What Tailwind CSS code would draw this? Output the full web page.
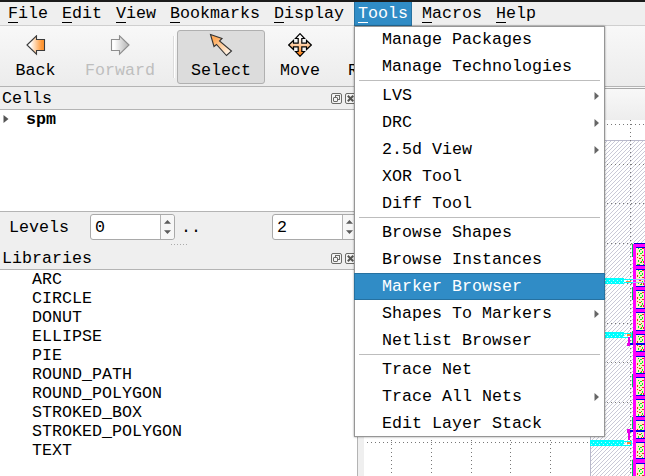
<!DOCTYPE html>
<html lang="en"><head><meta charset="utf-8"><title>Layout viewer</title>
<script src="https://cdn.jsdelivr.net/npm/@tailwindcss/browser@4"></script></head>
<body class="w-[645px] h-[476px] overflow-hidden bg-[#efefef] text-black text-[16.667px] leading-[19px] font-['Liberation_Mono',monospace] whitespace-nowrap">
<svg class="hidden">
 <symbol id="float" viewBox="0 0 11 11"><rect x=".5" y=".5" width="10" height="10" rx="1.5" fill="#f4f4f4" stroke="#6b6b68"/><rect x="4.5" y="2.5" width="4" height="4" fill="none" stroke="#6b6b68"/><rect x="2.5" y="4.5" width="4" height="4" rx=".5" fill="#f4f4f4" stroke="#6b6b68"/></symbol>
 <symbol id="close" viewBox="0 0 11 11"><rect x=".5" y=".5" width="10" height="10" rx="1.5" fill="#f4f4f4" stroke="#6b6b68"/><path d="M2.8 2.8l5.4 5.4M8.2 2.8L2.8 8.2" stroke="#555552" stroke-width="2"/></symbol>
 <symbol id="spin" viewBox="0 0 14 25"><path d="M3.2 9.5L7 5.5l3.8 4zM3.2 16.5L7 20.5l3.8-4z" fill="#5c5c5c"/></symbol>
 <symbol id="sub" viewBox="0 0 5 8"><path d="M.5 0L5 4L.5 8z" fill="#666"/></symbol>
</svg>
<div class="relative flex flex-col w-[645px] h-[476px]">
 <nav class="h-[26px] shrink-0 border-t-2 border-t-[#1b1b1b] border-b border-b-[#cfcfcf] flex text-[16.667px] leading-[24px]">
  <div class="pl-2 w-[62px]"><span class="inline-block h-[21px] border-b border-black">F</span>ile</div>
  <div class="w-[54px]"><span class="inline-block h-[21px] border-b border-black">E</span>dit</div>
  <div class="w-[54px]"><span class="inline-block h-[21px] border-b border-black">V</span>iew</div>
  <div class="w-[104px]"><span class="inline-block h-[21px] border-b border-black">B</span>ookmarks</div>
  <div class="w-[80px]"><span class="inline-block h-[21px] border-b border-black">D</span>isplay</div>
  <div class="w-[58px] h-6 bg-[#308cc6] border border-[#2671a0] border-t-0 text-white pl-[3px]"><span class="inline-block h-[21px] border-b border-white">T</span>ools</div>
  <div class="pl-[10px] w-[84px]"><span class="inline-block h-[21px] border-b border-black">M</span>acros</div>
  <div><span class="inline-block h-[21px] border-b border-black">H</span>elp</div>
 </nav>
 <div class="h-[61px] shrink-0 bg-linear-to-b from-[#f8f8f8] to-[#ececec] border-b border-[#b4b4b4] flex">
  <div class="w-[71px] pt-[9px] flex flex-col items-center">
   <svg class="w-5 h-[21px]" viewBox="0 0 20 21"><defs><linearGradient id="bk"><stop offset=".2" stop-color="#fff"/><stop offset=".85" stop-color="#ff9633"/></linearGradient></defs><path d="M1 10L10.500 .8V4.500H18.500V15.500H10.500V19.200Z" fill="url(#bk)" stroke="#3b3b3b" stroke-width="1.100"/></svg>
   <span class="mt-[5px]">Back</span></div>
  <div class="w-[98px] pt-[9px] flex flex-col items-center text-[#bebebe]">
   <svg class="w-5 h-[21px]" viewBox="0 0 20 21"><defs><linearGradient id="fw"><stop offset=".15" stop-color="#fff"/><stop offset=".9" stop-color="#bbb"/></linearGradient></defs><path d="M19 10L9.500 .8V4.500H1.500V15.500H9.500V19.200Z" fill="url(#fw)" stroke="#8e8e8e" stroke-width="1.100"/></svg>
   <span class="mt-[5px]">Forward</span></div>
  <div class="w-[2px] h-[42px] mt-[10px] ml-1 bg-[#dcdcdc] border-r border-white"></div>
  <div class="ml-[2px] mt-1 w-[88px] h-[54px] rounded-[3px] border border-[#b0b0b0] bg-[#dcdcdc] flex flex-col items-center">
   <svg class="w-6 h-6 mt-[2px]" viewBox="0 0 24 24"><defs><linearGradient id="sl" x2="1" y2="1"><stop offset=".2" stop-color="#ffa957"/><stop offset=".85" stop-color="#fff1e2"/></linearGradient></defs><path d="M1.500 1.500L13 5.500L10.500 8L22.500 18L17.500 22.500L7.500 11.500L5 13.500Z" fill="url(#sl)" stroke="#333" stroke-width="1.100"/></svg>
   <span class="mt-1">Select</span></div>
  <div class="w-[70px] pt-[7px] flex flex-col items-center">
   <svg class="w-6 h-6" viewBox="0 0 24 24"><defs><linearGradient id="mv" x2="0" y2="1"><stop offset=".2" stop-color="#fff"/><stop offset=".9" stop-color="#ff861c"/></linearGradient></defs><path d="M12 .7L16.500 5.500H13.800V10.200H18.500V7.500L23.300 12L18.500 16.500V13.800H13.800V18.500H16.500L12 23.300L7.500 18.500H10.200V13.800H5.500V16.500L.7 12L5.500 7.500V10.200H10.200V5.500H7.500Z" fill="url(#mv)" stroke="#000" stroke-width="1.200"/></svg>
   <span class="mt-1">Move</span></div>
  <div class="pt-[35px] pl-[13px]">R</div>
 </div>
 <main class="flex flex-1 min-h-0">
  <aside class="w-[358px] shrink-0 flex flex-col">
   <div class="h-[23px] shrink-0 flex items-center border-b border-[#b4b4b4] pl-[2px]"><span class="w-[329px]">Cells</span><svg class="w-[11px] h-[11px]"><use href="#float"/></svg><svg class="w-[11px] h-[11px] ml-[3px]"><use href="#close"/></svg></div>
   <div class="h-[102px] shrink-0 bg-white border-b border-[#b4b4b4] flex items-start pl-[3px]"><svg class="w-[6px] h-2 mt-[5px]" viewBox="0 0 5 8"><path d="M0 0L5 4L0 8z" fill="#555"/></svg><b class="ml-[17px]">spm</b></div>
   <div class="h-[34px] shrink-0 flex pl-[9px] relative">
    <span class="w-[81px] pt-[6px]">Levels</span>
    <div class="w-[85px] h-[26px] mt-[2px] bg-white border border-[#a9a9a9] rounded-[3px] flex"><span class="w-[69px] pl-1 pt-[3px]">0</span><div class="flex-1 border-l border-[#b4b4b4] bg-[#f7f7f7] rounded-r-[3px]"><svg class="w-[13px] h-6" viewBox="0 0 14 26"><use href="#spin" width="14" height="25"/></svg></div></div>
    <span class="ml-[6px] w-[91px] pt-[6px]">..</span>
    <div class="w-[85px] h-[26px] mt-[2px] bg-white border border-[#a9a9a9] rounded-[3px] flex"><span class="w-[69px] pl-1 pt-[3px]">2</span><div class="flex-1 border-l border-[#b4b4b4] bg-[#f7f7f7]"><svg class="w-[13px] h-6" viewBox="0 0 14 26"><use href="#spin" width="14" height="25"/></svg></div></div>
    <svg class="absolute left-[171px] top-[32px] w-[17px] h-[1px]"><path d="M0 .5H17" stroke="#aaa" stroke-dasharray="1 2"/></svg>
   </div>
   <div class="h-6 shrink-0 flex items-center border-b border-[#b4b4b4] pl-[2px] pt-px"><span class="w-[329px]">Libraries</span><svg class="w-[11px] h-[11px]"><use href="#float"/></svg><svg class="w-[11px] h-[11px] ml-[3px]"><use href="#close"/></svg></div>
   <div class="flex-1 bg-white border-r border-[#b4b4b4] pl-8 flex flex-col"><span>ARC</span><span>CIRCLE</span><span>DONUT</span><span>ELLIPSE</span><span>PIE</span><span>ROUND_PATH</span><span>ROUND_POLYGON</span><span>STROKED_BOX</span><span>STROKED_POLYGON</span><span>TEXT</span></div>
  </aside>
  <section class="ml-[6px] flex-1 flex flex-col">
   <div class="h-[33px] mt-0 shrink-0 border-t border-[#f8f8f8]"><div class="h-8 border-t border-[#a8a8a8] bg-linear-to-b from-[#f8f8f8] to-[#ededed]"></div></div>
   <svg class="flex-1 bg-white w-[281px]" viewBox="364 120 281 356" shape-rendering="crispEdges">
    <defs>
     <pattern id="hatch" width="4" height="4" patternUnits="userSpaceOnUse"><path d="M3 0h1v1h-1zM2 1h1v1h-1zM1 2h1v1h-1zM0 3h1v1h-1z" fill="#c9c9d7"/></pattern>
     <pattern id="cy" width="4" height="6" y="2" patternUnits="userSpaceOnUse"><path d="M0 0h4v6h-4z" fill="#0ff"/><path d="M1 2h1v1h-1zM3 4h1v1h-1z" fill="#b8ffff"/></pattern>
     <pattern id="cell" width="8" height="22" x="637" y="247" patternUnits="userSpaceOnUse"><path d="M0 0h8v22h-8z" fill="#ffebc8"/><path d="M1 1h1v1h-1zM3 2h2v1h-2zM2 3h1v2h-1zM5 4h1v2h-1zM3 6h2v1h-2zM2 8h1v1h-1zM4 10h1v1h-1zM1 13h1v2h-1zM5 12h1v2h-1zM3 15h2v1h-2zM6 17h1v1h-1zM0 17h2v1h-2z" fill="#00ee20"/><path d="M5 1h2v1h-2zM0 6h1v2h-1zM5 8h2v1h-2zM2 11h2v1h-2zM0 10h1v1h-1zM4 14h1v1h-1zM6 14h1v2h-1zM2 17h1v1h-1z" fill="#df3020"/></pattern>
    </defs>
    <path d="M590 140H645V476H590z" fill="url(#hatch)"/>
    <path d="M590.5 476V140.500H645" fill="none" stroke="#b9b9cb"/>
    <path d="M367 124.500H645M367 164.500H645M367 203.500H645M367 243.500H633M367 283.500H633M367 323.500H633M367 362.500H633M367 402.500H633M367 442.500H633M391.500 120V476M431.500 120V476M471.500 120V476M510.500 120V476M550.500 120V476M630.500 120V476" fill="none" stroke="#777" stroke-dasharray="1 3"/>
    <path d="M605 278H624V284H605zM605 332H624V338H605zM590 440H624V446H590z" fill="url(#cy)"/>
    <path d="M624 279.500H633M624 282.500H633M624 333.500H631V337.500H624M624 441.500H631V445.500H624" fill="none" stroke="#0ff"/>
    <path d="M626 281h5v1h-5zM627 334h4v2h-4zM627 442h4v2h-4z" fill="#ff8a30"/>
    <path d="M632 244h1v13h-1zM632 287h1v13h-1zM632 331h1v12h-1zM632 374h1v13h-1zM632 417h1v12h-1zM632 460h1v16h-1z" fill="#00c060"/>
    <path d="M633 244h12v232h-12z" fill="#f0f"/>
    <path d="M634 243h11v1h-11z" fill="#00c"/>
    <path d="M636 247h8v18h-8zM636 269h8v17h-8zM636 290h8v18h-8zM636 312h8v18h-8zM636 334h8v17h-8zM636 356h8v17h-8zM636 377h8v18h-8zM636 399h8v17h-8zM636 420h8v18h-8zM636 442h8v16h-8zM636 463h8v13h-8z" fill="url(#cell)"/>
    <path d="M636 247.500h9M636 265.500h9M636 269.500h9M636 286.500h9M636 290.500h9M636 308.500h9M636 312.500h9M636 330.500h9M636 334.500h9M636 351.500h9M636 356.500h9M636 373.500h9M636 377.500h9M636 395.500h9M636 399.500h9M636 416.500h9M636 420.500h9M636 438.500h9M636 442.500h9M636 458.500h9M636 463.500h9" stroke="#0000e8"/>
    <path d="M629 343h16v2h-16zM629 430h16v2h-16z" fill="#0000e8"/>
    <path d="M633 279.500h12M633 282.500h12" stroke="#b0b0ff"/>
    <path d="M628 337h2v9h-2zM627 343h3v3h-3zM628 429h2v11h-2zM627 429h3v4h-3zM633 343h3v2h-3zM633 430h3v2h-3z" fill="#e800e8"/>
   </svg>
  </section>
 </main>
 <div class="absolute left-[354px] top-[26px] w-[251px] h-[411px] bg-white border border-[#969696] shadow-[0_0_2px_#0006] flex flex-col leading-[25px]">
  <div class="h-[26px] shrink-0 pl-[27px]">Manage Packages</div>
  <div class="h-[27px] shrink-0 pl-[27px] flex items-center">Manage Technologies</div>
  <div class="h-[2px] shrink-0 mx-1 border-t border-[#bdbdbd]"></div>
  <div class="h-[27px] shrink-0 pl-[27px] pr-[5px] flex items-center justify-between">LVS<svg class="w-[5px] h-2"><use href="#sub"/></svg></div>
  <div class="h-[27px] shrink-0 pl-[27px] pr-[5px] flex items-center justify-between">DRC<svg class="w-[5px] h-2"><use href="#sub"/></svg></div>
  <div class="h-[27px] shrink-0 pl-[27px] pr-[5px] flex items-center justify-between">2.5d View<svg class="w-[5px] h-2"><use href="#sub"/></svg></div>
  <div class="h-[27px] shrink-0 pl-[27px] flex items-center">XOR Tool</div>
  <div class="h-[27px] shrink-0 pl-[27px] flex items-center">Diff Tool</div>
  <div class="h-[2px] shrink-0 mx-1 border-t border-[#bdbdbd]"></div>
  <div class="h-[27px] shrink-0 pl-[27px] flex items-center">Browse Shapes</div>
  <div class="h-[27px] shrink-0 pl-[27px] flex items-center">Browse Instances</div>
  <div class="h-[27px] shrink-0 -mx-px pl-[27px] flex items-center bg-[#308cc6] border border-[#2671a0] text-white">Marker Browser</div>
  <div class="h-[27px] shrink-0 pl-[27px] pr-[5px] flex items-center justify-between">Shapes To Markers<svg class="w-[5px] h-2"><use href="#sub"/></svg></div>
  <div class="h-[27px] shrink-0 pl-[27px] flex items-center">Netlist Browser</div>
  <div class="h-[2px] shrink-0 mx-1 border-t border-[#bdbdbd]"></div>
  <div class="h-[27px] shrink-0 pl-[27px] flex items-center">Trace Net</div>
  <div class="h-[27px] shrink-0 pl-[27px] pr-[5px] flex items-center justify-between">Trace All Nets<svg class="w-[5px] h-2"><use href="#sub"/></svg></div>
  <div class="h-[26px] shrink-0 pl-[27px] flex items-center">Edit Layer Stack</div>
 </div>
</div>
</body></html>
